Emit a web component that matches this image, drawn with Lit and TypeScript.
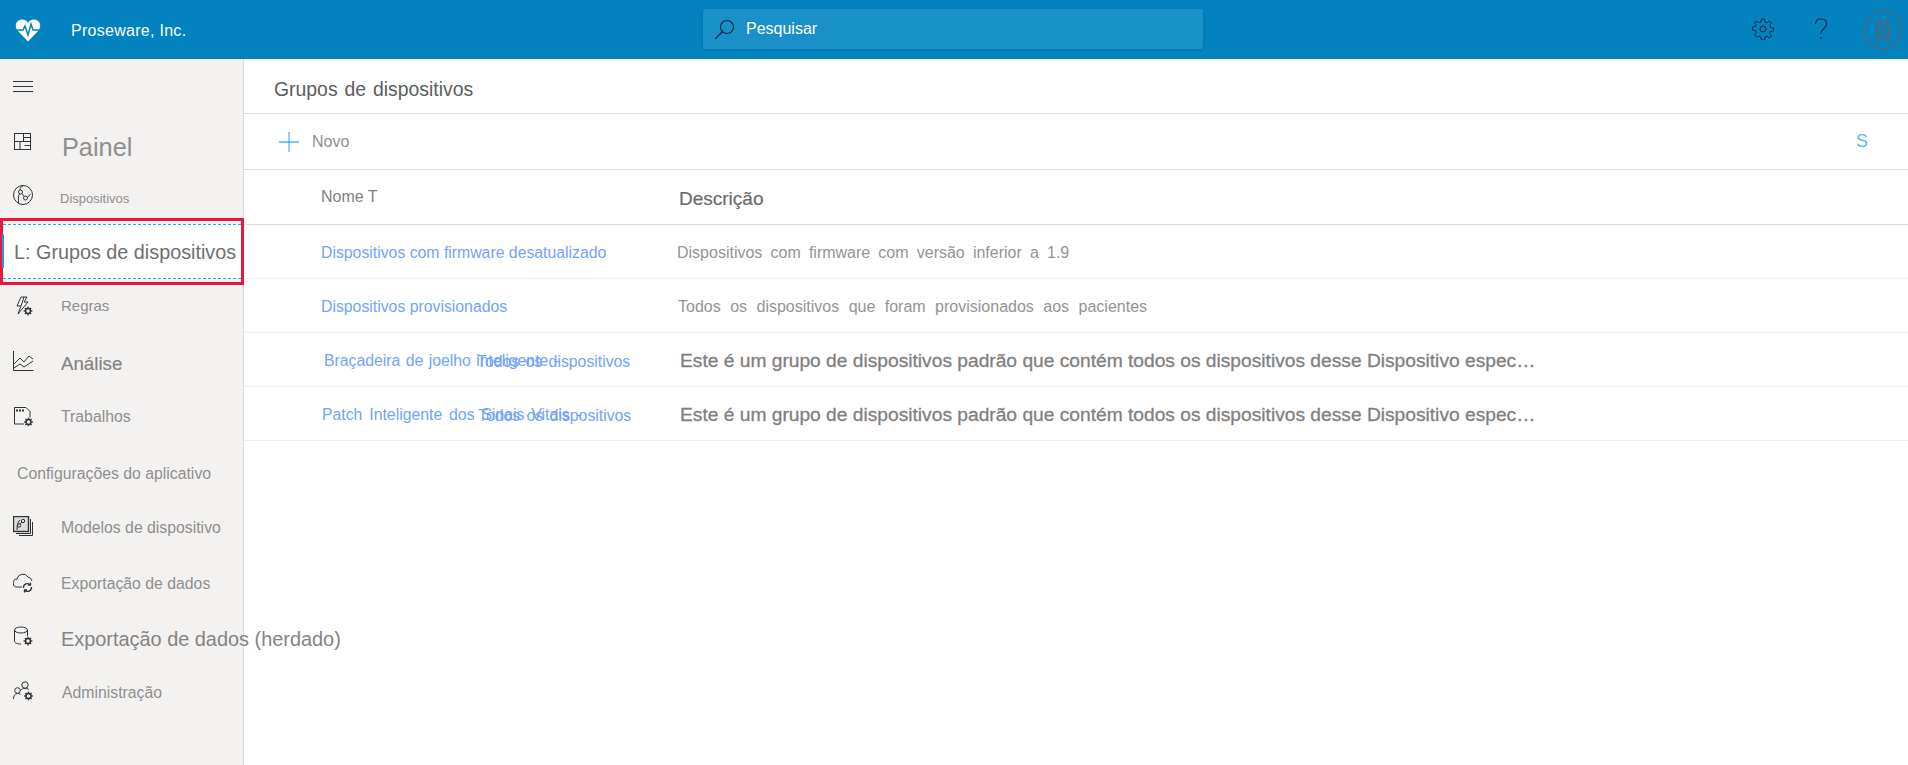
import { LitElement, html, svg, css } from 'lit'
import { customElement } from 'lit/decorators.js'

const gear = (cx: number, cy: number, r: number) => {
    const teeth = []
    for (let i = 0; i < 8; i++) {
        const a = (i * Math.PI) / 4
        teeth.push(
            svg`<line x1=${cx + Math.cos(a) * r * 0.7} y1=${cy + Math.sin(a) * r * 0.7} x2=${cx + Math.cos(a) * r * 1.25} y2=${cy + Math.sin(a) * r * 1.25} stroke-width="1.4"></line>`
        )
    }
    return svg`<circle cx=${cx} cy=${cy} r=${r * 0.7} fill="#f3f2f1" stroke-width="1.4"></circle>${teeth}`
}

const icons = {
    board: svg`<rect x="1.5" y="1.5" width="16" height="16"></rect><path d="M10.5 1.5v8M10.5 5.5h7M1.5 9.5h16M7 9.5v8M11.5 13.5h6"></path>`,
    device: svg`<circle cx="10" cy="10" r="9.5"></circle><circle cx="7.5" cy="7" r="2"></circle><circle cx="12.5" cy="13" r="2"></circle><path d="M9 8.5l2 3M14.5 12l3-2.500M5.500 18c0-4-.5-6 1-9.500M10 1c-2 0-3 2-3 4"></path>`,
    rules: svg`<path d="M8 1h6l-3 5h4L5 18l3-8H4z"></path><path d="M11 1l-3 9"></path>${gear(15, 15, 3.5)}`,
    chart: svg`<path d="M.5 0v19.500h20"></path><path d="M1 13l6-6 4 4 5-6 4 3M1 17l6-4 4 3 9-6"></path>`,
    jobs: svg`<path d="M11 18H1.500V1.500H13l4 4v6"></path><path d="M3 4.500h2M6 4.500h2M9 4.500h2" stroke-width="2"></path>${gear(15.5, 16, 3.5)}`,
    templates: svg`<rect x=".5" y=".5" width="15" height="15" fill="#ddd" stroke-width="1.400"></rect><circle cx="6" cy="9.500" r="1.700"></circle><circle cx="10" cy="5" r="1.700"></circle><path d="M7 8l2-2M4 14c0-4 .5-8 3-10"></path><path d="M17.500 3v14.500H3M19.500 6v13.500H6"></path>`,
    cloud: svg`<path d="M9 14H4.500a4 4 0 0 1-.5-8 6 6 0 0 1 11-2 5 5 0 0 1 4 4"></path><path d="M10.500 15a4 4 0 0 1 7-3M18.500 14a4 4 0 0 1-7 3M17.500 9.500v2.500h-2.500M11.500 19.500v-2.500h2.500" stroke-width="1.300"></path>`,
    legacy: svg`<ellipse cx="8" cy="4" rx="6.500" ry="3"></ellipse><path d="M1.500 4v11c0 2 2.500 3 6.500 3M14.500 4v6"></path>${gear(15, 15, 3.5)}`,
    admin: svg`<circle cx="12" cy="4" r="3.200"></circle><circle cx="4.500" cy="9.500" r="2.800"></circle><path d="M.5 18c0-3 1.500-5.500 4-5.500 1.500 0 2.500.5 3 1.500M7.500 9.500c1-1.500 2.500-2 4.500-2s3 .5 4 1"></path>${gear(15.5, 15, 3.5)}`,
}

type Nav = {
    label: string
    icon?: keyof typeof icons
    h: number
    iconTop?: number
    labelTop: number
    left: number
    size: string
}

const navTop: Nav[] = [
    { label: 'Painel', icon: 'board', h: 57, iconTop: 19, labelTop: 19, left: 29, size: 'xl' },
    { label: 'Dispositivos', icon: 'device', h: 48, iconTop: 15, labelTop: 21, left: 27, size: 'xs' },
]

const navBottom: Nav[] = [
    { label: 'Regras', icon: 'rules', h: 53, iconTop: 11, labelTop: 11, left: 28, size: 'rg' },
    { label: 'Análise', icon: 'chart', h: 52, iconTop: 13, labelTop: 14, left: 28, size: 'lg' },
    { label: 'Trabalhos', icon: 'jobs', h: 55, iconTop: 16, labelTop: 17, left: 28, size: 'sm' },
    { label: 'Configurações do aplicativo', h: 57, labelTop: 19, left: 17, size: 'sm' },
    { label: 'Modelos de dispositivo', icon: 'templates', h: 55, iconTop: 14, labelTop: 16, left: 28, size: 'sm' },
    { label: 'Exportação de dados', icon: 'cloud', h: 55, iconTop: 16, labelTop: 17, left: 28, size: 'sm' },
    { label: 'Exportação de dados (herdado)', icon: 'legacy', h: 53, iconTop: 14, labelTop: 15, left: 28, size: 'xxl' },
    { label: 'Administração', icon: 'admin', h: 60, iconTop: 16, labelTop: 18, left: 29, size: 'sm' },
]

const rows = [
    { name: 'Dispositivos com firmware desatualizado', desc: 'Dispositivos com firmware com versão inferior a 1.9', nameLeft: 77, nameSpacing: 0, descGap: 0, spacing: 3.7, strong: false, overLeft: 0 },
    { name: 'Dispositivos provisionados', desc: 'Todos os dispositivos que foram provisionados aos pacientes', nameLeft: 77, nameSpacing: 0, descGap: 1, spacing: 5, strong: false, overLeft: 0 },
    { name: 'Braçadeira de joelho inteligente -', over: 'Todos os dispositivos', desc: 'Este é um grupo de dispositivos padrão que contém todos os dispositivos desse Dispositivo específico', nameLeft: 80, nameSpacing: 1, descGap: 3, spacing: 0, strong: true, overLeft: 233 },
    { name: 'Patch Inteligente dos Sinais Vitais -', over: 'Todos os dispositivos', desc: 'Este é um grupo de dispositivos padrão que contém todos os dispositivos desse Dispositivo específico', nameLeft: 78, nameSpacing: 2.5, descGap: 3, spacing: 0, strong: true, overLeft: 234 },
]

@customElement('app-root')
export class AppRoot extends LitElement {
    static styles = css`
        :host {
            display: block;
            height: 765px;
            overflow: hidden;
            background: #fff;
            font-family: 'Liberation Sans', Arial, sans-serif;
        }

        .topbar {
            height: 59px;
            background: #0282bf;
            display: flex;
            align-items: center;
            position: relative;
            color: #fff;
        }

        .logo {
            margin-left: 15px;
            width: 26px;
            height: 24px;
        }

        .brand {
            margin-left: 30px;
            font-size: 16px;
            letter-spacing: 0.28px;
            margin-top: 3px;
        }

        .search {
            position: absolute;
            left: 703px;
            top: 9px;
            width: 500px;
            height: 40px;
            box-sizing: border-box;
            background: #1a90c8;
            border-radius: 2px;
            box-shadow: 0 1px 3px rgba(0, 0, 0, 0.15);
            display: flex;
            align-items: center;
            padding-left: 11px;
            gap: 11px;
            font-size: 16px;
        }

        .actions {
            margin-left: auto;
            display: flex;
            align-items: center;
        }

        .gear {
            margin: 0 40px 1px 0;
        }

        .help {
            margin: 0 35px 1px 0;
        }

        .avatar {
            margin-right: 5px;
        }

        .body {
            display: flex;
            height: 706px;
        }

        .side {
            width: 243px;
            flex: none;
            background: #f3f2f1;
            border-right: 1px solid #dcdcdc;
            position: relative;
            z-index: 1;
        }

        .burger {
            height: 54px;
            box-sizing: border-box;
            display: flex;
            align-items: center;
            padding: 2px 0 0 13px;
        }

        .nav {
            display: flex;
            align-items: flex-start;
            box-sizing: border-box;
            padding-left: 13px;
            white-space: nowrap;
            color: #8f8f8f;
        }

        .nav svg {
            flex: none;
        }

        .xl {
            font-size: 25.3px;
            line-height: 30px;
        }

        .xxl {
            font-size: 19.9px;
            line-height: 24px;
            color: #848484;
        }

        .lg {
            font-size: 18.7px;
            line-height: 24px;
            color: #848484;
            -webkit-text-stroke: 0.2px #848484;
        }

        .sm {
            font-size: 15.8px;
            line-height: 20px;
        }

        .rg {
            font-size: 15px;
            line-height: 20px;
        }

        .xs {
            font-size: 13px;
            line-height: 16px;
        }

        .selected {
            width: 244px;
            height: 67px;
            box-sizing: border-box;
            border: 3px solid #e8173f;
            position: relative;
            display: flex;
            align-items: center;
            padding: 3px 0;
        }

        .selected-inner {
            flex: 1;
            height: 100%;
            box-sizing: border-box;
            background: #fff;
            border-top: 1px dashed #14b0f0;
            border-bottom: 1px dashed #14b0f0;
            display: flex;
            align-items: center;
            padding: 2px 0 0 11px;
            font-size: 19.8px;
            color: #6f6f6f;
            white-space: nowrap;
        }

        .selected-bar {
            position: absolute;
            left: -1px;
            top: 13px;
            width: 2px;
            height: 34px;
            background: #1a9ee0;
        }

        .main {
            flex: 1;
            min-width: 0;
        }

        .title {
            height: 55px;
            box-sizing: border-box;
            border-bottom: 1px solid #dcdcdc;
            display: flex;
            align-items: center;
            padding: 7px 0 0 30px;
            font-size: 19.4px;
            word-spacing: 1.5px;
            color: #5c5c5c;
        }

        .toolbar {
            height: 56px;
            box-sizing: border-box;
            border-bottom: 1px solid #dcdcdc;
            display: flex;
            align-items: center;
            padding: 0 40px 0 35px;
            gap: 13px;
            font-size: 16px;
            color: #8f8f8f;
        }

        .sort {
            margin-left: auto;
            font-size: 18px;
            color: #62b6f7;
        }

        .head {
            height: 55px;
            box-sizing: border-box;
            border-bottom: 1px solid #dcdcdc;
            display: flex;
            align-items: center;
        }

        .head-name {
            width: 435px;
            box-sizing: border-box;
            padding: 0 0 1px 77px;
            font-size: 16px;
            color: #7f7f7f;
            flex: none;
        }

        .head-desc {
            padding-top: 4px;
            font-size: 19px;
            color: #6c6c6c;
            -webkit-text-stroke: 0.2px #6c6c6c;
        }

        .row {
            height: 54px;
            box-sizing: border-box;
            border-bottom: 1px solid #f0f0f0;
            display: flex;
            align-items: center;
            padding-top: 2px;
        }

        .name {
            width: 433px;
            flex: none;
            box-sizing: border-box;
            position: relative;
            font-size: 15.8px;
            color: #72a3fc;
            white-space: nowrap;
        }

        .name .over {
            position: absolute;
            top: 1px;
            word-spacing: 2px;
        }

        .desc {
            font-size: 16px;
            color: #949494;
            white-space: nowrap;
        }

        .desc.strong {
            width: 858px;
            font-size: 19.2px;
            padding-top: 1px;
            color: #808080;
            overflow: hidden;
            text-overflow: ellipsis;
            -webkit-text-stroke: 0.3px #808080;
        }
    `

    private navItem(n: Nav) {
        return html`
            <div class="nav" style="height: ${n.h}px">
                ${n.icon
                    ? html`<svg
                          width="21"
                          height="20"
                          viewBox="0 0 21 20"
                          fill="none"
                          stroke="#333"
                          style="margin-top: ${n.iconTop}px"
                      >
                          ${icons[n.icon]}
                      </svg>`
                    : ''}
                <span
                    class=${n.size}
                    style="margin-top: ${n.labelTop}px; margin-left: ${n.icon
                        ? n.left - 1
                        : n.left - 13}px"
                    >${n.label}</span
                >
            </div>
        `
    }

    render() {
        return html`
            <div class="topbar">
                <svg class="logo" viewBox="0 0 26 24">
                    <path
                        fill="#fff"
                        d="M13 23.500 2.500 12.500C-1 8.500 1 1.500 7 1.500c3 0 5 1.500 6 3.500 1-2 3-3.500 6-3.500 6 0 8 7 4.500 11z"
                    ></path>
                    <path
                        fill="none"
                        stroke="#0282bf"
                        stroke-width="1.500"
                        d="M2 12h6l2-4 3 9 3-11 2 6h6"
                    ></path>
                </svg>
                <span class="brand">Proseware, Inc.</span>
                <div class="search">
                    <svg width="21" height="21" viewBox="0 0 21 21" fill="none" stroke="#0b2a45" stroke-width="1.200">
                        <circle cx="13" cy="8" r="6.500"></circle>
                        <path d="M8.500 12.500 1 20"></path>
                    </svg>
                    <span>Pesquisar</span>
                </div>
                <div class="actions">
                    <svg class="gear" width="22" height="22" viewBox="0 0 22 22" fill="none" stroke="#0b2a45">
                        <circle cx="11" cy="11" r="3"></circle>
                        <path
                            d="M9.500 1h3l.5 3 2 .8 2.500-1.800 2 2-1.800 2.500.8 2 3 .5v3l-3 .5-.8 2 1.800 2.500-2 2-2.500-1.800-2 .8-.5 3h-3l-.5-3-2-.8L4.500 19l-2-2 1.800-2.500-.8-2-3-.5V9l3-.5.8-2L2.500 5l2-2L7 4.800l2-.8z"
                        ></path>
                    </svg>
                    <svg class="help" width="14" height="22" viewBox="0 0 14 22" fill="none" stroke="#0b2a45" stroke-width="1.200">
                        <path d="M1.500 6C1.500 3 3.500 1 7 1s5.500 2 5.500 5c0 4.500-5.500 4.500-5.500 10"></path>
                        <path d="M7 19v2"></path>
                    </svg>
                    <svg class="avatar" width="40" height="40" viewBox="0 0 40 40" fill="none" stroke="#5a6770" stroke-width="1.200">
                        <circle cx="20" cy="20" r="19"></circle>
                        <rect x="13.500" y="14" width="13" height="16" stroke-width="1.500"></rect>
                        <path d="M17.500 14l-2-6M22.500 14l2-6" stroke-width="1.500"></path>
                        <circle cx="20" cy="20" r="2.500"></circle>
                        <path d="M15.500 28.500c0-3 2-4.500 4.500-4.500s4.500 1.500 4.500 4.500"></path>
                    </svg>
                </div>
            </div>
            <div class="body">
                <div class="side">
                    <div class="burger">
                        <svg width="20" height="12" viewBox="0 0 20 12" stroke="#333">
                            <path d="M0 .5h20M0 5.500h20M0 10.500h20"></path>
                        </svg>
                    </div>
                    ${navTop.map((n) => this.navItem(n))}
                    <div class="selected">
                        <span class="selected-bar"></span>
                        <div class="selected-inner">L: Grupos de dispositivos</div>
                    </div>
                    ${navBottom.map((n) => this.navItem(n))}
                </div>
                <div class="main">
                    <div class="title">Grupos de dispositivos</div>
                    <div class="toolbar">
                        <svg width="20" height="20" viewBox="0 0 20 20">
                            <path d="M0 10h20" stroke="#7cc4ff" stroke-width="2"></path>
                            <path d="M10 0v20" stroke="#1ea0f5" stroke-width="1"></path>
                        </svg>
                        <span>Novo</span>
                        <span class="sort">S</span>
                    </div>
                    <div class="head">
                        <div class="head-name">Nome T</div>
                        <div class="head-desc">Descrição</div>
                    </div>
                    ${rows.map(
                        (r) => html`
                            <div class="row">
                                <div
                                    class="name"
                                    style="padding-left: ${r.nameLeft}px; word-spacing: ${r.nameSpacing}px"
                                >
                                    ${r.name}
                                    ${r.over
                                        ? html`<span class="over" style="left: ${r.overLeft}px">${r.over}</span>`
                                        : ''}
                                </div>
                                <div
                                    class="desc ${r.strong ? 'strong' : ''}"
                                    style="margin-left: ${r.descGap}px; word-spacing: ${r.spacing}px"
                                >
                                    ${r.desc}
                                </div>
                            </div>
                        `
                    )}
                </div>
            </div>
        `
    }
}
